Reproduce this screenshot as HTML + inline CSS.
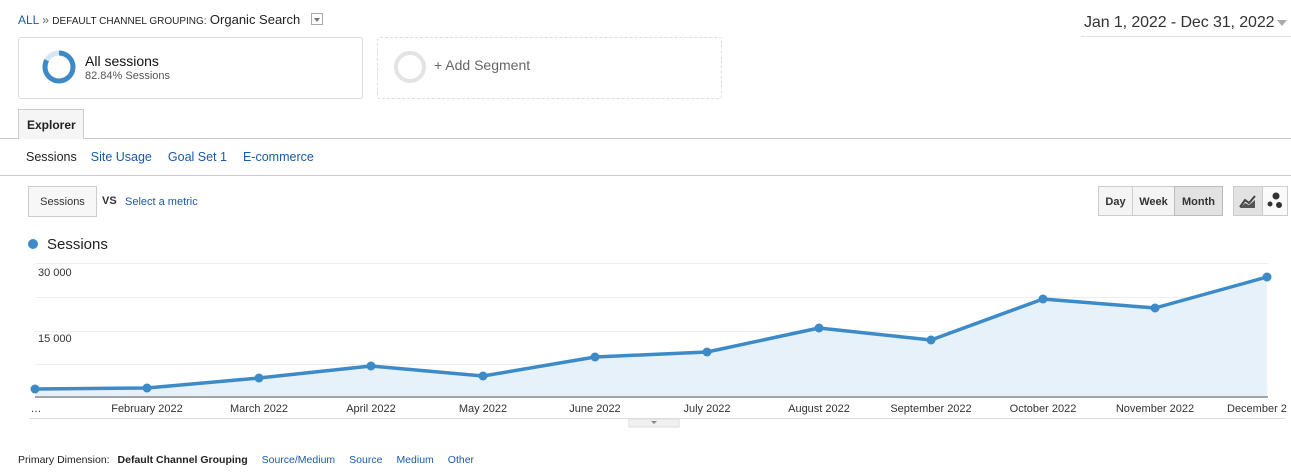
<!DOCTYPE html>
<html><head><meta charset="utf-8"><style>
body{margin:0;width:1291px;height:476px;background:#fff;font-family:"Liberation Sans",Arial,sans-serif;position:relative;overflow:hidden;color:#222}
.a{position:absolute;white-space:nowrap}
.blue{color:#1a5aa8}
.btn{position:absolute;border:1px solid #ccc;background:#f4f4f4;font-size:11px;font-weight:bold;color:#333;text-align:center;box-sizing:border-box}
</style></head><body>
<div class="a" style="left:18px;top:12px;font-size:12px"><span class="blue">ALL</span> <span style="color:#666">»</span> <span style="font-size:10px">DEFAULT CHANNEL GROUPING:</span> <span style="font-size:13px">Organic Search</span></div>
<div class="a" style="left:311px;top:13px;width:12px;height:12px;border:1px solid #aaa;box-sizing:border-box"><div style="margin:4px auto 0;width:0;height:0;border-left:3px solid transparent;border-right:3px solid transparent;border-top:4px solid #777"></div></div>
<div class="a" style="left:1084px;top:14px;font-size:16px;color:#333;letter-spacing:-0.1px">Jan 1, 2022 - Dec 31, 2022</div>
<div class="a" style="left:1277px;top:20px;border-left:5px solid transparent;border-right:5px solid transparent;border-top:6px solid #aaa"></div>
<div class="a" style="left:1081px;top:36px;width:210px;height:1px;background:#e0e0e0"></div>

<div class="a" style="left:18px;top:37px;width:345px;height:62px;border:1px solid #ddd;border-radius:3px;box-sizing:border-box"></div>
<svg class="a" style="left:41px;top:49px" width="36" height="36"><circle cx="18" cy="18" r="14" fill="none" stroke="#d4e5f3" stroke-width="5"/><circle cx="18" cy="18" r="14" fill="none" stroke="#3d8ac9" stroke-width="5" stroke-dasharray="72.9 88" transform="rotate(-90 18 18)"/></svg>
<div class="a" style="left:85px;top:53px;font-size:14px;color:#111">All sessions</div>
<div class="a" style="left:85px;top:70px;font-size:11px;color:#555">82.84% Sessions</div>
<div class="a" style="left:377px;top:37px;width:345px;height:62px;border:1px dashed #ddd;border-radius:3px;box-sizing:border-box"></div>
<div class="a" style="left:394px;top:51px;width:32px;height:32px;border:4px solid #e4e4e4;border-radius:50%;box-sizing:border-box"></div>
<div class="a" style="left:434px;top:57px;font-size:14px;color:#666">+ Add Segment</div>

<div class="a" style="left:18px;top:109px;width:66px;height:30px;border:1px solid #ccc;border-bottom:none;background:#f5f5f5;box-sizing:border-box;font-size:12px;font-weight:bold;padding:8px 0 0 8px">Explorer</div>
<div class="a" style="left:0;top:138px;width:1291px;height:1px;background:#ccc"></div>
<div class="a" style="left:19px;top:138px;width:64px;height:1px;background:#f5f5f5"></div>
<div class="a" style="left:26px;top:150px;font-size:12.5px"><span>Sessions</span><span class="blue" style="margin-left:14px">Site Usage</span><span class="blue" style="margin-left:16px">Goal Set 1</span><span class="blue" style="margin-left:16px">E-commerce</span></div>
<div class="a" style="left:0;top:175px;width:1291px;height:1px;background:#ccc"></div>

<div class="btn" style="left:28px;top:186px;width:69px;height:31px;font-weight:normal;padding-top:9px;background:#f7f7f7">Sessions</div>
<div class="a" style="left:102px;top:195px;font-size:11px;font-weight:bold;color:#333">VS</div>
<div class="a blue" style="left:125px;top:196px;font-size:11px">Select a metric</div>

<div class="btn" style="left:1098px;top:186px;width:35px;height:30px;padding-top:9px">Day</div>
<div class="btn" style="left:1132px;top:186px;width:43px;height:30px;padding-top:9px">Week</div>
<div class="btn" style="left:1174px;top:186px;width:49px;height:30px;padding-top:9px;background:#e2e2e2;border-color:#bbb">Month</div>
<div class="btn" style="left:1233px;top:186px;width:30px;height:30px;background:#e2e2e2"></div>
<svg class="a" style="left:1238px;top:192px" width="20" height="18"><path d="M2 15 L7 8 L11 11 L17 4" stroke="#444" stroke-width="2" fill="none"/><path d="M2 16 L7 11 L11 13 L17 8 L17 16Z" fill="#555"/></svg>
<div class="btn" style="left:1262px;top:186px;width:26px;height:30px;background:#fafafa"></div>
<svg class="a" style="left:1265px;top:190px" width="20" height="22"><circle cx="11" cy="6" r="3.5" fill="#333"/><circle cx="5" cy="14" r="2.5" fill="#333"/><circle cx="14" cy="15" r="3" fill="#333"/></svg>

<div class="a" style="left:28px;top:239px;width:10px;height:10px;border-radius:50%;background:#3d8ac9"></div>
<div class="a" style="left:47px;top:236px;font-size:15px;color:#222">Sessions</div>

<svg class="a" style="left:0;top:255px" width="1291" height="175">
<g stroke="#eee" stroke-width="1"><line x1="35" y1="8.5" x2="1268" y2="8.5"/><line x1="35" y1="42.5" x2="1268" y2="42.5"/><line x1="35" y1="76.5" x2="1268" y2="76.5"/><line x1="35" y1="109.5" x2="1268" y2="109.5"/></g>
<path d="M35 134 L147 133 L259 123 L371 111 L483 121 L595 102 L707 97 L819 73 L931 85 L1043 44 L1155 53 L1267 22 L1267 142 L35 142Z" fill="#e6f1f9"/>
<line x1="35" y1="142" x2="1268" y2="142" stroke="#888" stroke-width="1.5"/>
<path d="M35 134 L147 133 L259 123 L371 111 L483 121 L595 102 L707 97 L819 73 L931 85 L1043 44 L1155 53 L1267 22" fill="none" stroke="#3d8ac9" stroke-width="3.5" stroke-linejoin="round"/>
<g fill="#3d8ac9"><circle cx="35" cy="134" r="4.5"/><circle cx="147" cy="133" r="4.5"/><circle cx="259" cy="123" r="4.5"/><circle cx="371" cy="111" r="4.5"/><circle cx="483" cy="121" r="4.5"/><circle cx="595" cy="102" r="4.5"/><circle cx="707" cy="97" r="4.5"/><circle cx="819" cy="73" r="4.5"/><circle cx="931" cy="85" r="4.5"/><circle cx="1043" cy="44" r="4.5"/><circle cx="1155" cy="53" r="4.5"/><circle cx="1267" cy="22" r="4.5"/></g>
<line x1="29" y1="163.5" x2="1285" y2="163.5" stroke="#ddd"/>
<rect x="629" y="164" width="50" height="8" fill="#f0f0f0" stroke="#ddd"/>
<path d="M651 166 L657 166 L654 169Z" fill="#888"/>
<g font-family="Liberation Sans" font-size="11" fill="#333"><text x="38" y="21">30 000</text><text x="38" y="87">15 000</text>
<g text-anchor="middle"><text x="36" y="157">…</text><text x="147" y="157">February 2022</text><text x="259" y="157">March 2022</text><text x="371" y="157">April 2022</text><text x="483" y="157">May 2022</text><text x="595" y="157">June 2022</text><text x="707" y="157">July 2022</text><text x="819" y="157">August 2022</text><text x="931" y="157">September 2022</text><text x="1043" y="157">October 2022</text><text x="1155" y="157">November 2022</text></g><text x="1227" y="157">December 2</text></g>
</svg>

<div class="a" style="left:18px;top:454px;font-size:10.5px;color:#222">Primary Dimension: <b style="margin-left:5px">Default Channel Grouping</b><span class="blue" style="margin-left:14px">Source/Medium</span><span class="blue" style="margin-left:14px">Source</span><span class="blue" style="margin-left:14px">Medium</span><span class="blue" style="margin-left:14px">Other</span></div>
</body></html>
